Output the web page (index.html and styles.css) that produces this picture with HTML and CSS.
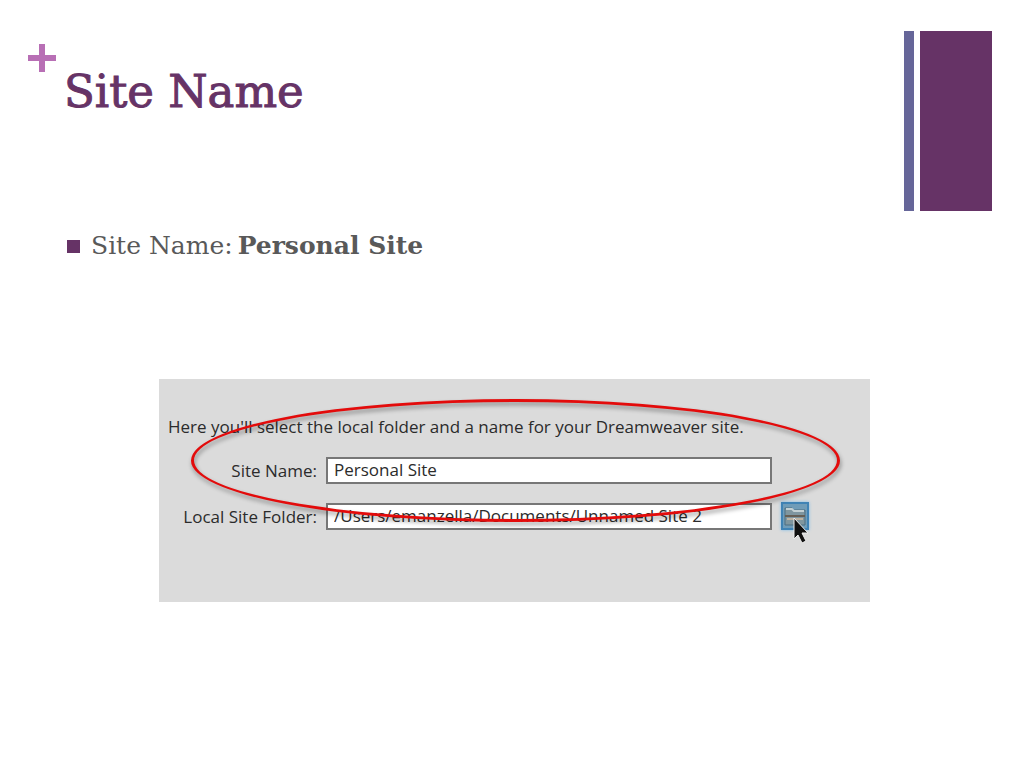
FILE: index.html
```html
<!DOCTYPE html>
<html lang="en">
<head>
    <meta charset="UTF-8">
    <meta name="viewport" content="width=device-width, initial-scale=1.0">
    <title>Site Name</title>
    <link rel="stylesheet" href="styles.css">
</head>
<body>

    <header class="header">
        <svg class="plus" viewBox="0 0 28 28" aria-hidden="true">
            <path d="M11 0h6v11h11v6H17v11h-6V17H0v-6h11z" fill="#b86fb5"/>
        </svg>
        <h1>Site Name</h1>
        <div class="bar bar-thin"></div>
        <div class="bar bar-wide"></div>
    </header>

    <main>
        <ul class="points">
            <li>Site Name: <strong>Personal Site</strong></li>
        </ul>

        <form class="dialog">
            <p>Here you'll select the local folder and a name for your Dreamweaver site.</p>
            <div class="row">
                <label for="site-name">Site Name:</label>
                <input type="text" id="site-name" value="Personal Site">
            </div>
            <div class="row">
                <label for="site-folder">Local Site Folder:</label>
                <input type="text" id="site-folder" value="/Users/emanzella/Documents/Unnamed Site 2">
                <button type="button" class="browse" aria-label="Browse for folder">
                    <svg viewBox="0 0 24 24" aria-hidden="true">
                        <path d="M2 21V4h7l2 2h11v15z" fill="#7f969f" stroke="#4d6f82"/>
                        <path d="M3 5h6l2 2h10" fill="none" stroke="#c3d0d3" stroke-width="2"/>
                        <path d="M2 12h20" stroke="#665f55" stroke-width="2"/>
                        <path d="M4 15h16" stroke="#bdb3a2" stroke-width="2"/>
                    </svg>
                </button>
            </div>
            <div class="highlight"></div>
            <svg class="cursor" viewBox="0 0 18 28" aria-hidden="true">
                <path d="M2 1v21l4-4 4 8 4-2-4-8h6z" fill="#111" stroke="#eee"/>
            </svg>
        </form>
    </main>

</body>
</html>
```

FILE: styles.css
```css
* {
    box-sizing: border-box;
}
body {
    margin: 0;
    padding: 31px 32px 32px 28px;
    background: white;
    font-family: "DejaVu Serif", serif;
}
.header {
    display: flex;
    align-items: flex-start;
}
.plus {
    width: 28px;
    height: 28px;
    margin-top: 13px;
}
h1 {
    flex: 1;
    margin: 33px 0 0 8px;
    font-size: 45px;
    line-height: 56px;
    font-weight: normal;
    color: #663366;
    -webkit-text-stroke: 1px #663366;
}
.bar {
    height: 180px;
}
.bar-thin {
    width: 10px;
    margin-right: 6px;
    background: #666699;
}
.bar-wide {
    width: 72px;
    background: #663366;
}
.points {
    list-style: none;
    margin: 17px 0 0 39px;
    padding: 0;
    font-size: 25px;
    line-height: 36px;
    color: #595959;
}
.points li {
    display: flex;
    align-items: center;
    gap: 5px;
}
.points li::before {
    content: "";
    width: 13px;
    height: 13px;
    margin-right: 6px;
    background: #663366;
}
.dialog {
    position: relative;
    height: 223px;
    margin: 115px 122px 0 131px;
    padding: 36px 61px 0 9px;
    background: #dbdbdb;
    font-family: "Open Sans", sans-serif;
    font-size: 17px;
    color: #2b2b2b;
}
.dialog p {
    margin: 0 0 18px;
    line-height: 24px;
}
.row {
    display: grid;
    grid-template-columns: 149px 1fr 28px;
    column-gap: 9px;
    align-items: center;
    height: 27px;
    margin-bottom: 18px;
}
.row label {
    text-align: right;
}
.row input {
    width: 100%;
    height: 27px;
    padding: 0 6px 2px;
    border: 2px solid #777;
    background: white;
    font: inherit;
    color: inherit;
}
.browse {
    width: 28px;
    height: 28px;
    padding: 0;
    border: 2px solid #3f83b5;
    background: #6f9cb8;
    box-shadow: 0 0 3px #7dbbe8;
}
.browse svg {
    display: block;
    width: 24px;
    height: 24px;
}
.highlight {
    position: absolute;
    top: 20px;
    left: 32px;
    right: 30px;
    height: 123px;
    border: 3px solid #e30b0b;
    border-radius: 50%;
    filter: drop-shadow(1px 3px 2px rgba(0, 0, 0, 0.4));
    pointer-events: none;
}
.cursor {
    position: absolute;
    top: 138px;
    right: 60px;
    width: 18px;
    height: 28px;
}
```
